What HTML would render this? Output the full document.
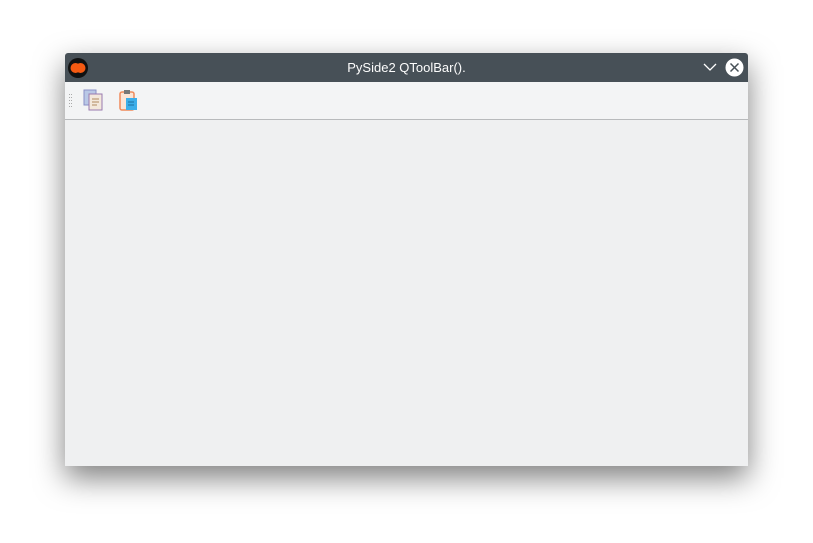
<!DOCTYPE html>
<html><head><style>
body{margin:0;width:813px;height:543px;background:#fff;overflow:hidden;font-family:"Liberation Sans",sans-serif;position:relative}
.win{position:absolute;left:65px;top:53px;width:683px;height:413px;background:#eff0f1;box-shadow:0 12px 30px rgba(0,0,0,.5);border-radius:3px 3px 0 0;overflow:hidden}
.title{height:29px;background:#475057;color:#fcfcfc;font-size:13px;text-align:center;line-height:29px;position:relative}
.tb{height:37px;background:#f3f4f5;border-bottom:1px solid #b8babc}
</style></head><body>
<div class="win">
<div class="title">PySide2 QToolBar().
<svg style="position:absolute;left:3px;top:5px" width="20" height="20"><circle cx="10" cy="10" r="10" fill="#111"/><circle cx="7.5" cy="10" r="5" fill="#f65a12"/><circle cx="12.5" cy="10" r="5" fill="#f65a12"/></svg>
<svg style="position:absolute;left:638px;top:9px" width="14" height="10"><path d="M1 2 L7 8 L13 2" stroke="#fff" stroke-width="1.3" fill="none"/></svg>
<svg style="position:absolute;left:660px;top:5px" width="19" height="19"><circle cx="9.5" cy="9.5" r="9" fill="#fff"/><path d="M5.5 5.5 L13.5 13.5 M13.5 5.5 L5.5 13.5" stroke="#475057" stroke-width="1.5"/></svg>
</div>
<div class="tb" style="position:relative">
<svg style="position:absolute;left:4px;top:12px" width="4" height="16"><g fill="#aaa"><rect x="0" y="0" width="1" height="1"/><rect x="2" y="0" width="1" height="1"/><rect x="0" y="3" width="1" height="1"/><rect x="2" y="3" width="1" height="1"/><rect x="0" y="6" width="1" height="1"/><rect x="2" y="6" width="1" height="1"/><rect x="0" y="9" width="1" height="1"/><rect x="2" y="9" width="1" height="1"/><rect x="0" y="12" width="1" height="1"/><rect x="2" y="12" width="1" height="1"/></g></svg>
<svg style="position:absolute;left:18px;top:7px" width="22" height="24"><rect x="1" y="1" width="12" height="15" fill="#b9c8e6" stroke="#8a8fc6"/><rect x="6" y="5" width="13" height="16" fill="#f3e8dc" stroke="#9a7ab0"/><path d="M9 10h7M9 13h7M9 16h5" stroke="#b08a60"/></svg>
<svg style="position:absolute;left:53px;top:7px" width="22" height="24"><rect x="2" y="3" width="14" height="18" rx="2" fill="#fbe4d6" stroke="#f08a5a" stroke-width="1.5"/><rect x="6" y="1" width="6" height="4" fill="#777"/><rect x="8" y="9" width="11" height="12" fill="#3daee9"/><path d="M10 13h6M10 16h6" stroke="#1d6fa0"/></svg>
</div>
</div>
</body></html>
